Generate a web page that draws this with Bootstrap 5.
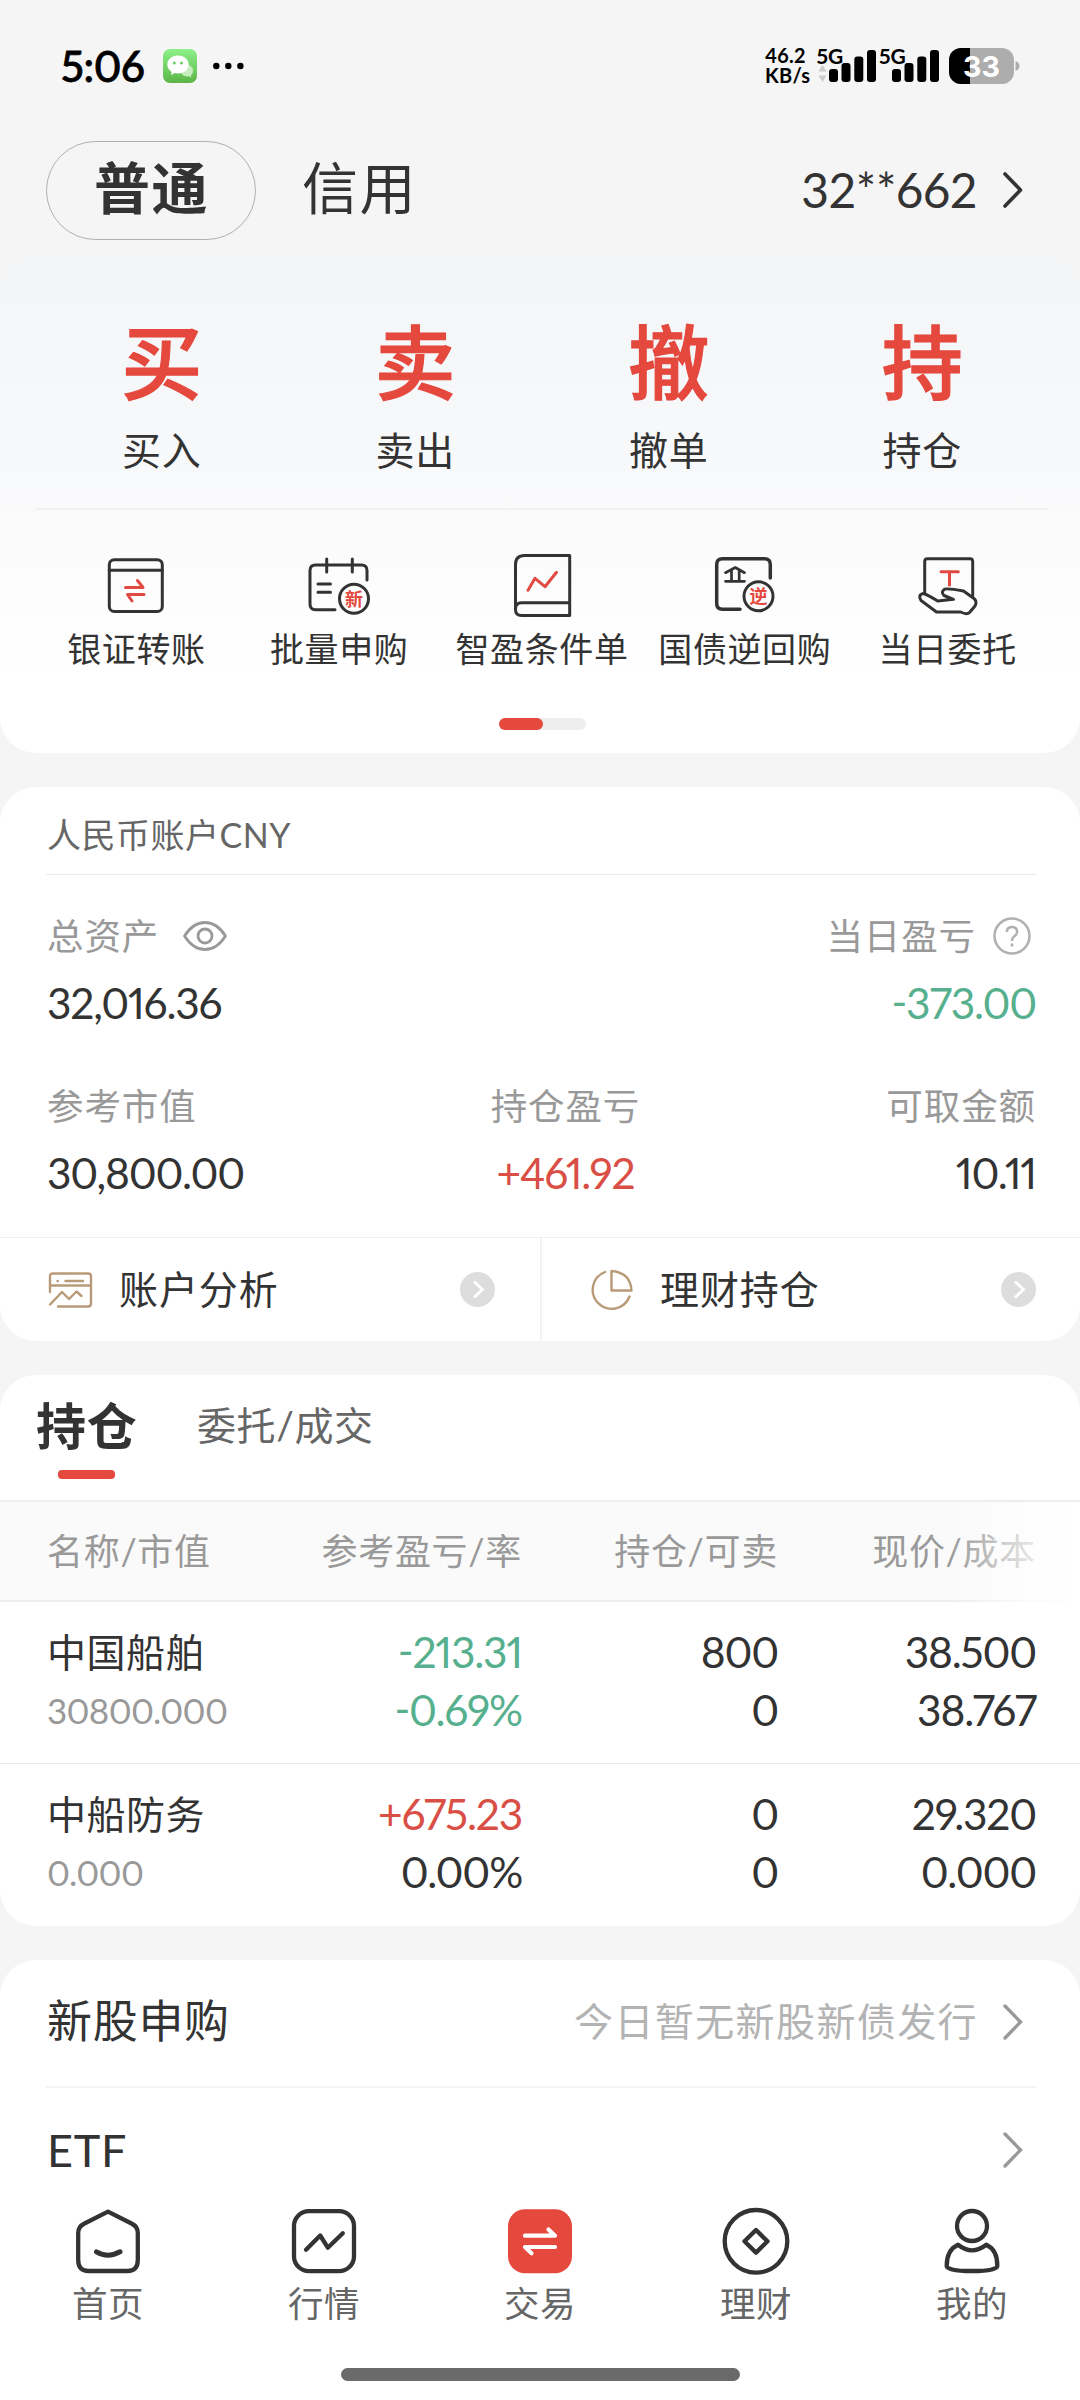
<!DOCTYPE html>
<html lang="zh-CN">
<head>
<meta charset="utf-8">
<meta name="viewport" content="width=device-width, initial-scale=1">
<title>交易</title>
<link href="https://cdn.jsdelivr.net/npm/bootstrap@5.3.0/dist/css/bootstrap.min.css" rel="stylesheet">
<style>
:root{--ink:#333;--red:#e5483d;--green:#56b08e;--grey:#999;--line:#eee}
body{width:1080px;height:2400px;overflow:hidden;background:#f5f5f5;color:var(--ink);font-family:Lato,"Noto Sans CJK SC",sans-serif;font-size:40px;line-height:1;font-feature-settings:"pnum" 1,"kern" 1;white-space:nowrap}
svg{display:block;flex:none;overflow:visible}
.ln{stroke:#333;fill:none;stroke-linejoin:round;stroke-linecap:round}
.rd{stroke:#e04a42;fill:none;stroke-linejoin:round;stroke-linecap:round}
.up{color:#d94f45}.down{color:var(--green)}
.statusbar{height:130px;padding:2px 61px 0 61px}
.clock{font-size:42px;font-weight:500;color:#000;letter-spacing:-.4px;width:102px;-webkit-text-stroke:.8px #000}
.netspeed{font-size:20px;font-weight:700;line-height:20px;color:#000;width:50px;margin-top:-3px;letter-spacing:.3px}
.acctbar{height:124px;padding:0 57px 4px 46px}
.pill{width:210px;height:99px;border:1px solid #b0b0b0;border-radius:50px;font-size:56px;font-weight:700;letter-spacing:1.4px;padding-left:1px}
.credit{font-size:56px;letter-spacing:1.4px;margin-left:46px}
.acct-no{font-size:48px;letter-spacing:-.2px;margin-right:26px}
.panel{background:#fff;border-radius:36px;margin-bottom:34px}
.trade{height:499px;background:linear-gradient(#f4f5f7 0,#f8f9fb 45%,#fbfbfb 56%,#fff 85%);padding:0 31px 0 35px}
.quick{height:256px;border-bottom:2px solid #f2f2f2;padding-top:66px}
.quick .big{font-size:81px;font-weight:500;color:var(--red);height:84px;line-height:84px;-webkit-text-stroke:1.2px var(--red)}
.quick .cap{font-size:39px;letter-spacing:.8px;margin-top:27px}
.short{padding-top:40px}
.short .cap{font-size:34px;letter-spacing:.6px;margin-top:12px}
.cell5{width:203.4px}
.pager{width:87px;height:12px;border-radius:6px;background:#eee;margin:52px auto 0}
.pager i{display:block;width:44px;height:12px;border-radius:6px;background:var(--red)}
.ttl{height:88px;margin:0 44px 0 46px;padding:8px 0 0 1px;border-bottom:1px solid #e9e9e9;font-size:34px;letter-spacing:.5px;color:#666}
.pad{padding:0 44px 0 47px}
.lab{font-size:36.5px;letter-spacing:.9px;color:var(--grey)}
.num{font-size:42.5px;letter-spacing:-1.2px;font-feature-settings:"pnum" 1,"kern" 1,"case" 1}
.mid{padding-left:48px}
.half{height:103px;font-size:39px;letter-spacing:.9px}
.half+.half{border-left:2px solid #f2f2f2}
.tabs{height:127px;padding-left:36px;border-bottom:2px solid var(--line)}
.tab-on{font-size:50px;font-weight:700;letter-spacing:.8px;padding-top:26px;width:101px}
.tab-on i{display:block;width:57px;height:9px;border-radius:4px;background:var(--red);margin:19px 0 0 22px}
.tab-off{font-size:39px;letter-spacing:.6px;color:#666;padding-top:31px;margin-left:60px}
.gridrow{display:grid;grid-template-columns:206px 269px 256px 1fr;padding:0 44px 0 47px;text-align:right}
.gridrow>:first-child{text-align:left}
.head{height:100px;background:#fafafa;border-bottom:2px solid var(--line);align-items:center;position:relative;font-size:36px;letter-spacing:.7px}
.head::after{content:"";position:absolute;right:0;top:0;width:130px;height:102px;background:linear-gradient(90deg,#fff0,#fffb 60%,#fff)}
.pos{height:161px;padding-top:21px;line-height:58px}
.pos+.pos{height:163px;border-top:1px solid #e9e9e9}
.pos .nm{font-size:39px;letter-spacing:.5px}
.pos .mv{font-size:35px;color:var(--grey);letter-spacing:-.7px}
.entry{font-size:45px;letter-spacing:.7px}
.hint{font-size:39px;letter-spacing:1.4px;color:#b3b3b3;margin-right:25px}
.navcap{font-size:35.5px;color:#666;letter-spacing:.4px;margin-top:10px}
.homebar{width:399px;height:13px;border-radius:7px;background:#6a6a6a;margin:46px auto 0}
</style>
<script src="https://cdn.jsdelivr.net/npm/bootstrap@5.3.0/dist/js/bootstrap.bundle.min.js"></script>
</head>
<body>
<header>
  <div class="statusbar d-flex align-items-center">
    <span class="clock">5:06</span>
    <svg width="34" height="34" viewBox="0 0 34 34"><defs><linearGradient id="wg" x2="0" y2="1"><stop stop-color="#8cf088"/><stop offset="1" stop-color="#5cb648"/></linearGradient></defs><rect width="34" height="34" rx="7" fill="url(#wg)"/><path d="M24 16c4 0 6 2.500 6 6 0 2-1 3.500-2 4.200l.3 2.300-2.600-1.300c-4 .8-7.500-1-7.700-5 0-3.500 2.500-6.200 6-6.200z" fill="#c5ecbd"/><path d="M15 6.500c6.200 0 10.700 4 10.700 9s-4.500 9-10.700 9c-1.200 0-2.400-.1-3.400-.4L8 26.300l.7-3.400C6 21.200 4.300 18.700 4.300 15.500c0-5 4.500-9 10.700-9z" fill="#fff"/><circle cx="11.300" cy="14" r="1.500" fill="#6ad065"/><circle cx="18.500" cy="14" r="1.500" fill="#6ad065"/></svg>
    <svg class="ms-3" width="32" height="8" viewBox="0 0 32 8"><circle cx="3.300" cy="4" r="3.200"/><circle cx="15.300" cy="4" r="3.200"/><circle cx="27.400" cy="4" r="3.200"/></svg>
    <div class="netspeed ms-auto">46.2<br>KB/s</div>
    <svg width="134" height="36" viewBox="815 48 134 36" font-family="Lato,sans-serif" font-weight="700" font-size="21"><text x="816.500" y="64">5G</text><text x="879" y="64">5G</text><path d="M822.500 65l4 6.500h-8zM822.500 82l4-6.500h-8z" fill="#ccc"/><g><rect x="829" y="69" width="9" height="13" rx="3"/><rect x="841.500" y="63" width="9" height="19" rx="3"/><rect x="854.300" y="56.500" width="9" height="25.500" rx="3"/><rect x="867" y="50" width="9" height="32" rx="3"/><rect x="892" y="69" width="9" height="13" rx="3"/><rect x="904.500" y="63" width="9" height="19" rx="3"/><rect x="917.300" y="56.500" width="9" height="25.500" rx="3"/><rect x="930" y="50" width="9" height="32" rx="3"/></g></svg>
    <svg width="70" height="36" viewBox="949 48 70 36"><defs><clipPath id="bc"><rect x="949" y="48" width="65" height="36" rx="12"/></clipPath></defs><g clip-path="url(#bc)"><path d="M949 48h65v36h-65z" fill="#adadad"/><path d="M949 48h21v36h-21z"/></g><path d="M1015.500 61q4 1.500 4 5t-4 5z" fill="#adadad"/><text x="963" y="76.500" font-family="Inter,sans-serif" font-weight="700" font-size="29" fill="#fff" textLength="37" lengthAdjust="spacingAndGlyphs">33</text></svg>
  </div>
  <div class="acctbar d-flex align-items-center">
    <div class="pill d-flex align-items-center justify-content-center pb-1">普通</div>
    <div class="credit pb-1">信用</div>
    <div class="acct-no ms-auto">32**662</div>
    <svg width="20" height="36" viewBox="0 0 20 36"><path class="ln" stroke-width="3.600" d="M2 2L17.500 18 2 34"/></svg>
  </div>
</header>
<main>
  <section class="panel trade">
    <div class="quick row g-0 text-center">
      <div class="col-3"><div class="big">买</div><div class="cap">买入</div></div>
      <div class="col-3"><div class="big">卖</div><div class="cap">卖出</div></div>
      <div class="col-3"><div class="big">撤</div><div class="cap">撤单</div></div>
      <div class="col-3"><div class="big">持</div><div class="cap">持仓</div></div>
    </div>
    <div class="short d-flex text-center">
      <div class="cell5 d-flex flex-column align-items-center">
        <svg width="70" height="70" viewBox="0 0 70 70" stroke-width="3"><rect class="ln" x="8.300" y="9.700" width="53" height="51.700" rx="5"/><path class="ln" d="M8.300 20.300h53"/><path class="rd" d="M24.500 37.500H42L36.500 30.500M43 44.500H26.500L31 51"/></svg>
        <div class="cap">银证转账</div></div>
      <div class="cell5 d-flex flex-column align-items-center">
        <svg width="70" height="70" viewBox="0 0 70 70" stroke-width="3"><path class="ln" d="M63 30V20.500Q63 15 57.500 15H11.500Q6 15 6 20.500V54Q6 59.700 11.500 59.700H31M22.700 9v13M48.300 9v13M14 34h12.500M14 42.300h12.500"/><circle class="ln" cx="50" cy="48.700" r="14.500"/><text x="50" y="55.500" text-anchor="middle" font-size="18" font-weight="700" fill="#e5483d" stroke="none">新</text></svg>
        <div class="cap">批量申购</div></div>
      <div class="cell5 d-flex flex-column align-items-center">
        <svg width="70" height="70" viewBox="0 0 70 70" stroke-width="3"><path class="ln" d="M62.700 5.500H17.500Q8.500 5.500 8.500 14.500V59.500Q8.500 65.500 14.500 65.500H62.700zM8.500 58.700Q8.500 52.700 14.500 52.700H62.700"/><path class="rd" d="M21 40.300L28 28.300 38 36.700 49.500 22.300"/></svg>
        <div class="cap">智盈条件单</div></div>
      <div class="cell5 d-flex flex-column align-items-center">
        <svg width="70" height="70" viewBox="0 0 70 70" stroke-width="3"><path class="ln" stroke-width="3.500" d="M60.300 28V14.500Q60.300 8.700 54.500 8.700H12.500Q6.700 8.700 6.700 14.500V53.500Q6.700 59.300 12.500 59.300H30"/><path class="ln" stroke-width="2.700" d="M15.500 22.700L25.300 17.500 34.500 22.700M21.500 20.500v10.500M29.200 20.500v10.500M15.500 31.300h19"/><circle class="ln" cx="48.500" cy="46.300" r="14.500"/><text x="48.500" y="53" text-anchor="middle" font-size="18" font-weight="700" fill="#e5483d" stroke="none">逆</text></svg>
        <div class="cap">国债逆回购</div></div>
      <div class="cell5 d-flex flex-column align-items-center">
        <svg width="70" height="70" viewBox="0 0 70 70" stroke-width="3"><path class="ln" d="M11.700 42.500V11.500Q11.700 8.700 14.500 8.700H57Q59.700 8.700 59.700 11.500V46"/><path class="rd" d="M28 21.700h17.300M36.500 21.700V35"/><path class="ln" d="M10.500 43.500Q15 45 24.700 51L40.500 49.300 31 45.500Q27.500 42 31.500 39.200Q35 38 50.500 41L61 48.500Q64.500 51.500 62 56L56.500 62.500Q54 65 47.500 62H23.500L8 50.500Q4.500 44.500 10.500 43.500z"/></svg>
        <div class="cap">当日委托</div></div>
    </div>
    <div class="pager"><i></i></div>
  </section>

  <section class="panel">
    <div class="ttl d-flex align-items-center pb-0">人民币账户CNY</div>
    <div class="pad">
      <div class="d-flex align-items-center lab" style="height:122px">
        <span>总资产</span>
        <svg class="ms-4" width="44" height="30" viewBox="0 0 44 30" fill="none" stroke="#999" stroke-width="2.800"><path d="M1.500 15Q10 1.500 22 1.500T42.500 15Q34 28.500 22 28.500T1.500 15z" stroke-linejoin="round"/><circle cx="22" cy="15" r="7"/></svg>
        <span class="ms-auto">当日盈亏</span>
        <svg style="margin:0 5px 0 17px" width="38" height="38" viewBox="0 0 38 38" fill="none" stroke="#b0b0b0" stroke-width="2.500"><circle cx="19" cy="19" r="17.500"/><path d="M13.800 15Q14 10 19 10t5.200 4.800Q24.200 17.500 21 19.500 19 21 19 24M19 26.500v3"/></svg>
      </div>
      <div class="d-flex justify-content-between num" style="margin-top:-15px"><span>32,016.36</span><span class="down">-373.00</span></div>
      <div class="row g-0 lab" style="margin-top:63px"><span class="col-4">参考市值</span><span class="col-4 text-center mid">持仓盈亏</span><span class="col-4 text-end">可取金额</span></div>
      <div class="row g-0 num" style="margin-top:28px;height:85px"><span class="col-4">30,800.00</span><span class="col-4 text-center up mid">+461.92</span><span class="col-4 text-end">10.11</span></div>
    </div>
    <div class="row g-0 border-top" style="--bs-border-color:#eee">
      <div class="col-6 half d-flex align-items-center ps-5">
        <svg width="44" height="36" viewBox="0 0 44 36" fill="none" stroke="#b89a78" stroke-width="2.400" stroke-linecap="round" stroke-linejoin="round"><path d="M2 20V4.500Q2 1.500 5 1.500H40Q43 1.500 43 4.500V31.500Q43 34.500 40 34.500H10M2 13.500H43M9.500 9h.3M17.500 9H35M2 32.500L14 20l7 7L28.500 19.500l5 4.500"/></svg>
        <span style="margin-left:27px">账户分析</span>
        <svg class="ms-auto" style="margin-right:45px" width="35" height="35" viewBox="0 0 35 35"><circle cx="17.500" cy="17.500" r="17.500" fill="#ddd"/><path d="M14 9.500L22.500 17.500 14 25.500" stroke="#fff" stroke-width="2.800" fill="none"/></svg>
      </div>
      <div class="col-6 half d-flex align-items-center">
        <svg style="margin-left:49px" width="42" height="42" viewBox="0 0 42 42" fill="none" stroke="#b89a78" stroke-width="2.400" stroke-linecap="round" stroke-linejoin="round"><path d="M14 3A19 19 0 1 0 38.500 27.500M20.500 2V21.500H40.500Q39.500 3.500 20.500 2z"/></svg>
        <span style="margin-left:27px">理财持仓</span>
        <svg class="ms-auto" style="margin-right:44px" width="35" height="35" viewBox="0 0 35 35"><circle cx="17.500" cy="17.500" r="17.500" fill="#ddd"/><path d="M14 9.500L22.500 17.500 14 25.500" stroke="#fff" stroke-width="2.800" fill="none"/></svg>
      </div>
    </div>
  </section>

  <section class="panel overflow-hidden">
    <div class="tabs d-flex"><div class="tab-on">持仓<i></i></div><div class="tab-off">委托/成交</div></div>
    <div class="gridrow head lab"><span>名称/市值</span><span>参考盈亏/率</span><span>持仓/可卖</span><span>现价/成本</span></div>
    <div class="gridrow pos num">
      <div><div class="nm">中国船舶</div><div class="mv">30800.000</div></div>
      <div class="down">-213.31<br>-0.69%</div><div>800<br>0</div><div>38.500<br>38.767</div>
    </div>
    <div class="gridrow pos num">
      <div><div class="nm">中船防务</div><div class="mv">0.000</div></div>
      <div><span class="up">+675.23</span><br>0.00%</div><div>0<br>0</div><div>29.320<br>0.000</div>
    </div>
  </section>

  <section class="panel rounded-bottom-0 mb-0">
    <div class="d-flex align-items-center" style="height:128px;margin:0 44px 0 46px;border-bottom:2px solid #f3f3f3;padding:0 13px 3px 1px"><span class="entry">新股申购</span><span class="hint ms-auto">今日暂无新股新债发行</span>
      <svg width="20" height="36" viewBox="0 0 20 36"><path d="M2 2L17.500 18 2 34" fill="none" stroke="#999" stroke-width="3.400" stroke-linecap="round"/></svg></div>
    <div class="d-flex align-items-center" style="height:118px;margin:0 44px 0 46px;padding:6px 13px 0 1px"><span class="entry">ETF</span>
      <svg class="ms-auto" width="20" height="36" viewBox="0 0 20 36"><path d="M2 2L17.500 18 2 34" fill="none" stroke="#999" stroke-width="3.400" stroke-linecap="round"/></svg></div>
  </section>
</main>
<nav class="bg-white" style="height:200px">
  <div class="d-flex text-center">
    <div class="flex-fill d-flex flex-column align-items-center w-100"><svg width="70" height="70" viewBox="0 0 70 70" stroke-width="4.300"><path class="ln" d="M35 5.700L58.500 17.500Q64.800 20.500 64.800 27V54Q64.800 65 54.500 65H15.500Q5.200 65 5.200 54V27Q5.200 20.500 11.500 17.500z"/><path class="ln" stroke-width="5" d="M23.500 45.800Q35 52.500 47 45.800"/></svg><div class="navcap">首页</div></div>
    <div class="flex-fill d-flex flex-column align-items-center w-100"><svg width="70" height="70" viewBox="0 0 70 70" stroke-width="4.300"><rect class="ln" x="5" y="5.200" width="60" height="60" rx="15"/><path class="ln" d="M17 43.700L31.200 29.500 38.800 41.700 53.800 27.300"/></svg><div class="navcap">行情</div></div>
    <div class="flex-fill d-flex flex-column align-items-center w-100"><svg width="70" height="70" viewBox="0 0 70 70"><rect x="3" y="3.200" width="64" height="64" rx="17" fill="#e5483d"/><path d="M20 29.700H50L43.500 23.500M50 41H20L26.500 47.200" fill="none" stroke="#fff" stroke-width="4.200" stroke-linecap="round" stroke-linejoin="round"/></svg><div class="navcap up">交易</div></div>
    <div class="flex-fill d-flex flex-column align-items-center w-100"><svg width="70" height="70" viewBox="0 0 70 70" stroke-width="4.300"><circle class="ln" cx="35" cy="35.300" r="31.300"/><path class="ln" d="M35 24L46.500 35.300 35 46.600 23.500 35.300z"/></svg><div class="navcap">理财</div></div>
    <div class="flex-fill d-flex flex-column align-items-center w-100"><svg width="70" height="70" viewBox="0 0 70 70" stroke-width="4.300"><circle class="ln" cx="35" cy="20" r="15"/><path class="ln" d="M21 38.800Q35 50 49.300 38.800Q60.500 44 60.300 60Q60 65 35 65T9.700 60Q9.700 44 21 38.800z"/></svg><div class="navcap">我的</div></div>
  </div>
  <div class="homebar"></div>
</nav>
</body>
</html>
